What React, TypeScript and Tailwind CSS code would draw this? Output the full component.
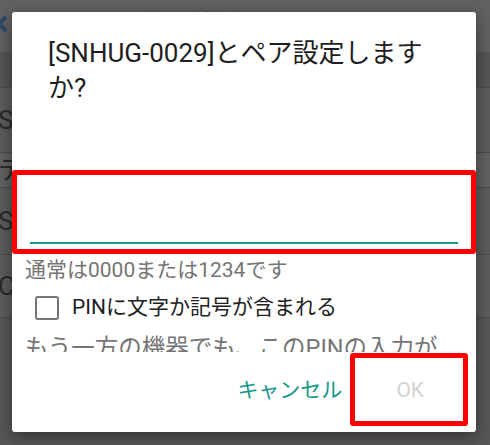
import React from "react";

const font = "font-['Roboto','Noto_Sans_CJK_JP',sans-serif]";

const rows = [
  { h: "h-[35px]", bg: "bg-[#555555]", label: "" },
  { h: "h-[65px]", bg: "bg-[#5c5c5c]", label: "S" },
  { h: "h-[35px]", bg: "bg-[#626262]", label: "デ" },
  { h: "h-[67px]", bg: "bg-[#5c5c5c]", label: "S" },
  { h: "h-[63px]", bg: "bg-[#5c5c5c]", label: "C" },
];

const App: React.FC = () => {
  return (
    <div className={`relative w-[490px] h-[445px] overflow-hidden bg-[#575757] ${font}`}>
      {/* BACKGROUND PAGE (dimmed) */}
      <div className="flex flex-col">
        <div className="h-[53px] bg-[#616161] border-b border-[#555555] flex items-start">
          <svg width="14" height="16" viewBox="0 0 14 16" className="mt-[16px] -ml-[5px]">
            <path d="M11 1 L4 8 L11 15" fill="none" stroke="#2b4866" strokeWidth="4" />
          </svg>
          <span className="ml-[132px] mt-[11px] text-[22px] leading-[24px] text-[#3a3a3a] tracking-[4px]">
            機器接続設定とペア
          </span>
        </div>
        {rows.map((r, i) => (
          <div
            key={i}
            className={`${r.h} ${r.bg} border-b border-[#4d4d4d] flex items-center -ml-[2px] text-[26px] text-[#2a2a2a]`}
          >
            {r.label}
          </div>
        ))}
      </div>

      {/* DIALOG */}
      <div className="absolute left-[12px] top-[12px] w-[464px] h-[420px] bg-white rounded-[3px] shadow-[0_4px_16px_rgba(0,0,0,0.45)] flex flex-col">
        <div className="px-[36px] pt-[24px] text-[26px] leading-[35px] text-[#1e1e1e]">
          [SNHUG-0029]とペア設定します
          <br />
          か?
        </div>

        <div className="mt-[90px] mx-[18px] h-[48px] border-b-2 border-[#159a8c]" />

        <div className="mt-[14px] px-[13px] text-[21px] leading-[24px] text-[#757575]">
          通常は0000または1234です
        </div>

        <div className="mt-[12px] h-[28px] flex items-center pl-[23px]">
          <div className="w-[24px] h-[24px] border-2 border-[#757575] rounded-[3px]" />
          <span className="ml-[13px] text-[21px] text-[#212121]">PINに文字か記号が含まれる</span>
        </div>

        {/* scrolled message, only its top edge shows */}
        <div className="h-[30px] overflow-hidden pt-[10px] px-[13px]">
          <div className="text-[23.5px] leading-[32px] text-[#757575] whitespace-nowrap">
            もう一方の機器でも、このPINの入力が
          </div>
        </div>

        <div className="flex-1 flex items-center justify-end pr-[52px] pb-[2px]">
          <button className="text-[21px] text-[#15968a]">キャンセル</button>
          <button className="ml-[54px] text-[21px] text-[#d2d2d2]">OK</button>
        </div>
      </div>

      {/* ANNOTATIONS */}
      <div className="absolute left-[12px] top-[170px] w-[464px] h-[84px] border-[5px] border-[#ff0000] rounded-[3px]" />
      <div className="absolute left-[350px] top-[353px] w-[118px] h-[73px] border-[5px] border-[#ff0000] rounded-[3px]" />
    </div>
  );
};

export default App;
